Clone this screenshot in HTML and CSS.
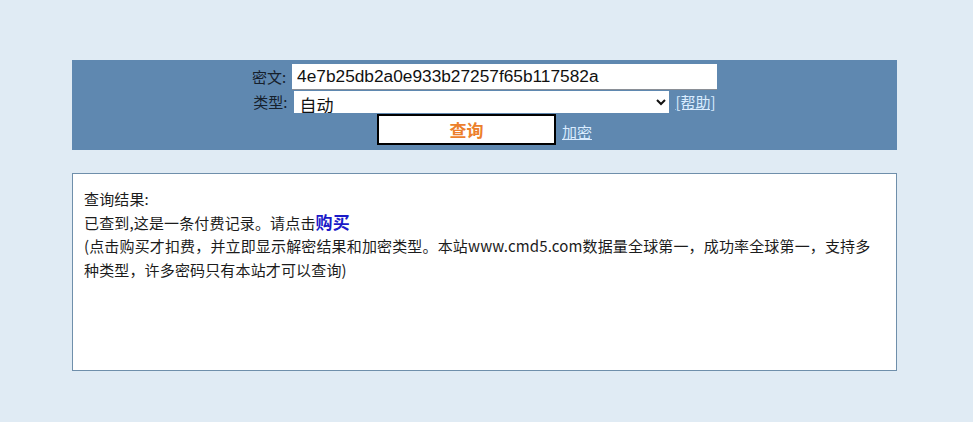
FILE: index.html
```html
<!DOCTYPE html>
<html lang="zh-CN">
<head>
<meta charset="utf-8">
<title>cmd5</title>
<link rel="stylesheet" href="styles.css">
</head>
<body>
<div class="panel">
  <div class="row row-hash">
    <label class="lbl">密文:</label>
    <input class="hash" type="text" value="4e7b25db2a0e933b27257f65b117582a">
  </div>
  <div class="row row-type">
    <label class="lbl">类型:</label>
    <select class="type"><option>自动</option></select>
    <a class="lnk help" href="#">[帮助]</a>
  </div>
  <div class="row row-btn">
    <button class="query" type="button">查询</button>
    <a class="lnk enc" href="#">加密</a>
  </div>
</div>
<div class="result">
  <div class="line">查询结果:</div>
  <div class="line">已查到,这是一条付费记录。请点击<a class="buy" href="#">购买</a></div>
  <div class="line">(点击购买才扣费，并立即显示解密结果和加密类型。本站www.cmd5.com数据量全球第一，成功率全球第一，支持多种类型，许多密码只有本站才可以查询)</div>
</div>
</body>
</html>
```
FILE: styles.css
```css
html, body {
  margin: 0;
  padding: 0;
  background: #e0ebf4;
}
body {
  font-family: "Noto Sans CJK SC", "Liberation Sans", sans-serif;
  color: #1c1c1c;
  padding-top: 60px;
  padding-left: 72px;
}
.panel {
  width: 825px;
  height: 90px;
  box-sizing: border-box;
  background: #5f88b0;
  padding-top: 4px;
  display: flex;
  flex-direction: column;
  align-items: center;
}
.row {
  display: flex;
  align-items: center;
  justify-content: center;
}
.lbl {
  font-size: 15px;
  color: #16202c;
  margin-right: 6px;
  line-height: 20px;
}
.hash {
  width: 425px;
  height: 26px;
  box-sizing: border-box;
  border: none;
  border-bottom: 1px solid #8a8f96;
  padding: 0 5px;
  font-family: "Liberation Sans", Arial, sans-serif;
  font-size: 17.3px;
  color: #111;
  background: #fff;
  outline: none;
}
.row-type {
  margin-top: 1px;
}
.type {
  width: 375px;
  height: 22px;
  box-sizing: border-box;
  border: none;
  padding: 0 2px;
  font-family: "Noto Sans CJK SC", sans-serif;
  font-size: 17px;
  line-height: 20px;
  color: #111;
  background: #fff;
  border-radius: 0;
}
.lnk {
  color: #d9ecff;
  font-size: 15px;
  text-decoration: underline;
  line-height: 20px;
}
.help {
  margin-left: 7px;
}
.row-btn {
  margin-top: 1px;
}
.query {
  width: 179px;
  height: 31px;
  box-sizing: border-box;
  border: 2px solid #000;
  background: #fff;
  color: #ec7f2c;
  font-family: "Noto Sans CJK SC", sans-serif;
  font-size: 17px;
  font-weight: bold;
  padding: 0;
  line-height: 1;
}
.enc {
  margin-left: 6px;
  margin-top: 4px;
}
.result {
  margin-top: 23px;
  width: 825px;
  height: 198px;
  box-sizing: border-box;
  border: 1px solid #6f8fab;
  background: #fff;
  padding: 13px 20px 13px 11px;
  font-size: 15px;
  letter-spacing: 0.15px;
  line-height: 23.5px;
  color: #1c1c1c;
}
.line {
  line-height: 23.5px;
}
.buy {
  color: #1a1ac8;
  font-weight: bold;
  font-size: 17px;
  line-height: 20px;
  text-decoration: none;
}
```
